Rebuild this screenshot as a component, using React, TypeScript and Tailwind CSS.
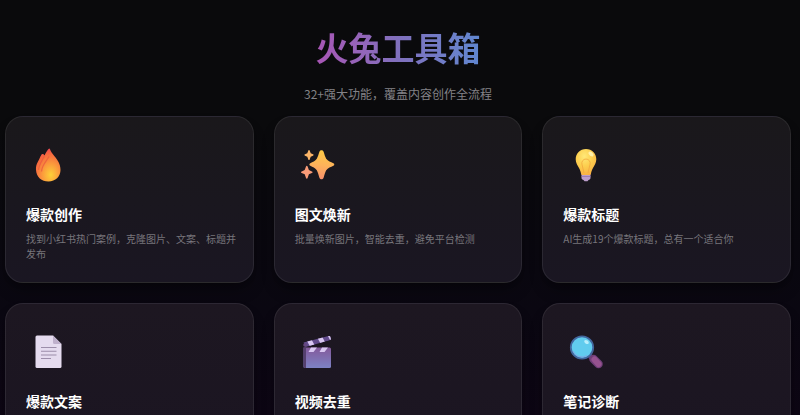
import React from 'react';

interface Tool {
  title: string;
  description: string;
  icon: React.ReactNode;
}

const FireIcon = () => (
  <svg className="w-11 h-11" viewBox="0 0 44 44" aria-hidden="true">
    <defs>
      <radialGradient id="fireBody" cx="0.6" cy="0.8" r="0.85">
        <stop offset="0" stopColor="#fdd038" />
        <stop offset="0.4" stopColor="#fb9a3c" />
        <stop offset="0.75" stopColor="#f5683f" />
        <stop offset="1" stopColor="#ee3f5a" />
      </radialGradient>
    </defs>
    <path d="M22.500 6c-1 1-2.500 3.500-4 6.500-.5-1.200-1.300-1.800-2.200-1.500-1.300.4-2.300 4-4.300 7.500-1.800 3.200-2.200 5.500-2 8.500C10.400 34.200 15.500 38.500 22.500 38.500S34.500 33.500 34.500 27c0-6-3-10-5.800-13.500-2.200-2.800-4-4.800-4.700-7.300-.3-1-.9-1-1.500-.2z" fill="url(#fireBody)" />
    <path d="M18.500 12.500c-1.500 4-5.500 8.500-6 14.500M23 13.500c-2 4-7 8-7.500 15" fill="none" stroke="#e8563f" strokeWidth="1.200" opacity="0.7" />
  </svg>
);

const SparklesIcon = () => (
  <svg className="w-11 h-11" viewBox="0 0 44 44" aria-hidden="true">
    <defs>
      <linearGradient id="spark" x1="0.5" y1="0" x2="0.4" y2="1">
        <stop offset="0" stopColor="#fdc944" />
        <stop offset="0.5" stopColor="#fdb35a" />
        <stop offset="1" stopColor="#f9906c" />
      </linearGradient>
    </defs>
    <path d="M24.500 8.500c.8-1.800 3.200-1.800 4 0 1 3 1.500 5 2.700 7.200 1.800 2.300 4.500 3.300 7.200 4.500 1.200.6 1.200 2 0 2.600-2.700 1.200-5.400 2.200-7.200 4.500-1.200 2.200-1.700 4.700-2.700 7.700-.8 1.800-3.200 1.800-4 0-1-3-1.500-5.500-2.700-7.700-1.600-2.300-4.100-3.300-6.500-4.500-1.200-.6-1.200-2 0-2.600 2.400-1.200 4.900-2.200 6.500-4.500 1.200-2.200 1.700-4.200 2.700-7.200z" fill="url(#spark)" />
    <path d="M13.300 7.500c.2-.8 1.200-.8 1.400 0l1 2.800 2.300 1c.8.3.8 1.100 0 1.400l-2.300 1-1 2.800c-.2.8-1.200.8-1.400 0l-1-2.800-2.300-1c-.8-.3-.8-1.100 0-1.400l2.300-1z" fill="#fcb568" />
    <path d="M11 23.500c.3-1 1.300-1 1.600 0l1.300 3.600 3 1.300c.9.400.9 1.200 0 1.600l-3 1.300-1.300 3.700c-.3 1-1.300 1-1.600 0l-1.300-3.700-3-1.300c-.9-.4-.9-1.200 0-1.600l3-1.300z" fill="#f99c78" />
  </svg>
);

const BulbIcon = () => (
  <svg className="w-11 h-11" viewBox="0 0 44 44" aria-hidden="true">
    <defs>
      <radialGradient id="bulb" cx="0.42" cy="0.28" r="0.75">
        <stop offset="0" stopColor="#ffe878" />
        <stop offset="0.5" stopColor="#fccf4f" />
        <stop offset="1" stopColor="#f9b042" />
      </radialGradient>
    </defs>
    <path d="M18.500 30h9v5c0 1.200-1 1.800-2 2l-1 1.200h-3l-1-1.200c-1-.2-2-.8-2-2z" fill="#bb9dcb" />
    <path d="M18.500 33.500h9" stroke="#9675aa" strokeWidth="0.800" />
    <path d="M23 6c-6 0-10.300 4.500-10.300 10.300 0 3.800 1.800 6.200 3.300 8.700 1.200 2 1.700 4 2 5.500.2 1 .8 1.500 1.500 1.500h7c.7 0 1.300-.5 1.500-1.500.3-1.500.8-3.500 2-5.500 1.500-2.500 3.300-4.900 3.300-8.700C33.300 10.500 29 6 23 6z" fill="url(#bulb)" />
    <path d="M21 30l-2-8.500a4.200 4.200 0 1 1 8 0L25 30" fill="none" stroke="#f2a83f" strokeWidth="1" opacity="0.8" />
    <ellipse cx="28" cy="11" rx="3" ry="1.800" transform="rotate(40 28 11)" fill="#fff4b4" opacity="0.900" />
  </svg>
);

const DocumentIcon = () => (
  <svg className="w-11 h-11" viewBox="0 0 44 44" aria-hidden="true">
    <path d="M11 5.500h16l8.500 8.500v22.500a1.500 1.500 0 0 1-1.500 1.500H11a1.500 1.500 0 0 1-1.500-1.500V7A1.500 1.500 0 0 1 11 5.500z" fill="#e5dbef" />
    <path d="M27 5.500l8.500 8.500H28.500A1.500 1.500 0 0 1 27 12.500z" fill="#bfb0cc" />
    <path d="M15 17.500h15.500M15 21.300h15.500M15 25h15.500M15 28.500h10" stroke="#9c8daa" strokeWidth="1.100" />
  </svg>
);

const ClapperIcon = () => (
  <svg className="w-11 h-11" viewBox="0 0 44 44" aria-hidden="true">
    <defs>
      <linearGradient id="clapBody" x1="0" y1="0" x2="0" y2="1">
        <stop offset="0" stopColor="#83599b" />
        <stop offset="1" stopColor="#7d82c4" />
      </linearGradient>
      <clipPath id="clapTop">
        <path d="M8.500 12.500L33.500 6c1.200-.3 1.700.3 1.900 1l.4 1.500c.2 1-.3 1.500-1.300 1.800L10.500 17z" />
      </clipPath>
    </defs>
    <path d="M8.500 17.500H34.500a1.500 1.500 0 0 1 1.500 1.500v17.500a1.500 1.500 0 0 1-1.500 1.500H10A1.500 1.500 0 0 1 8.500 36.500z" fill="url(#clapBody)" />
    <path d="M8.500 17.500h2.500V38H10a1.500 1.500 0 0 1-1.500-1.500z" fill="#55406f" />
    <g clipPath="url(#clapTop)">
      <path d="M7 5h30v13H7z" fill="#624b8c" />
      <path d="M11.500 10l4.500-1.500 3.500 6.500-4.500 1.500zM22 7l4.500-1.500 3.500 6.500-4.500 1.500zM32 4l4-1 2 8-2 1z" fill="#d9c7f2" />
    </g>
    <circle cx="10" cy="15" r="1.800" fill="#65477f" />
    <path d="M16 17.500h6L18.500 22h-5zM27 17.500h6L29.500 22h-5z" fill="#d9c7f2" />
  </svg>
);

const MagnifierIcon = () => (
  <svg className="w-11 h-11" viewBox="0 0 44 44" aria-hidden="true">
    <path d="M27.500 26.500l4 4" stroke="#5f3d6c" strokeWidth="5" strokeLinecap="round" />
    <path d="M30.500 29l5 5" stroke="#6f3f78" strokeWidth="8.500" strokeLinecap="round" />
    <path d="M31.500 29.500l4 4.500" stroke="#96528f" strokeWidth="6" strokeLinecap="round" />
    <circle cx="19" cy="17.500" r="11.200" fill="#61ccee" stroke="#43679e" strokeWidth="1.800" />
    <path d="M10 21a9.600 9.600 0 0 0 14 4.500" fill="none" stroke="#80a9e4" strokeWidth="1" />
    <ellipse cx="23.500" cy="12" rx="2.500" ry="1.700" transform="rotate(35 23.500 12)" fill="#b8eefc" />
  </svg>
);

const tools: Tool[] = [
  { title: '爆款创作', description: '找到小红书热门案例，克隆图片、文案、标题并发布', icon: <FireIcon /> },
  { title: '图文焕新', description: '批量焕新图片，智能去重，避免平台检测', icon: <SparklesIcon /> },
  { title: '爆款标题', description: 'AI生成19个爆款标题，总有一个适合你', icon: <BulbIcon /> },
  { title: '爆款文案', description: '', icon: <DocumentIcon /> },
  { title: '视频去重', description: '', icon: <ClapperIcon /> },
  { title: '笔记诊断', description: '', icon: <MagnifierIcon /> },
];

const ToolCard: React.FC<{ tool: Tool }> = ({ tool }) => (
  <article className="min-h-[167px] rounded-[18px] border border-white/8 bg-linear-to-b from-[#1a181b] to-[#1a1622] nth-[n+4]:from-[#1d1721] nth-[n+4]:to-[#1b1522] pl-5 pr-4 pt-[26px] pb-5 shadow-lg shadow-black/30">
    {tool.icon}
    <h2 className="mt-[17px] text-[14px] leading-5 font-bold text-white">{tool.title}</h2>
    {tool.description && (
      <p className="mt-[7px] text-[10px] leading-[15px] text-[#77757b]">{tool.description}</p>
    )}
  </article>
);

const App: React.FC = () => {
  return (
    <div className="h-screen overflow-hidden bg-linear-to-b from-[#0a0a0c] from-30% via-[#0a0711] via-75% to-[#0d0614] font-['Noto_Sans_CJK_SC',sans-serif]">
      <header className="pt-[26px] pr-1 text-center">
        <h1 className="inline-block bg-linear-to-r from-[#a855b5] via-[#8070bd] to-[#5f87d0] bg-clip-text text-[33px] leading-[42px] font-bold text-transparent">
          火兔工具箱
        </h1>
        <p className="mt-4 text-[12px] leading-5 text-[#838287]">32+强大功能，覆盖内容创作全流程</p>
      </header>
      <main className="mt-3 grid grid-cols-3 gap-5 pl-[5px] pr-[9px]">
        {tools.map((tool) => (
          <ToolCard key={tool.title} tool={tool} />
        ))}
      </main>
    </div>
  );
};

export default App;
